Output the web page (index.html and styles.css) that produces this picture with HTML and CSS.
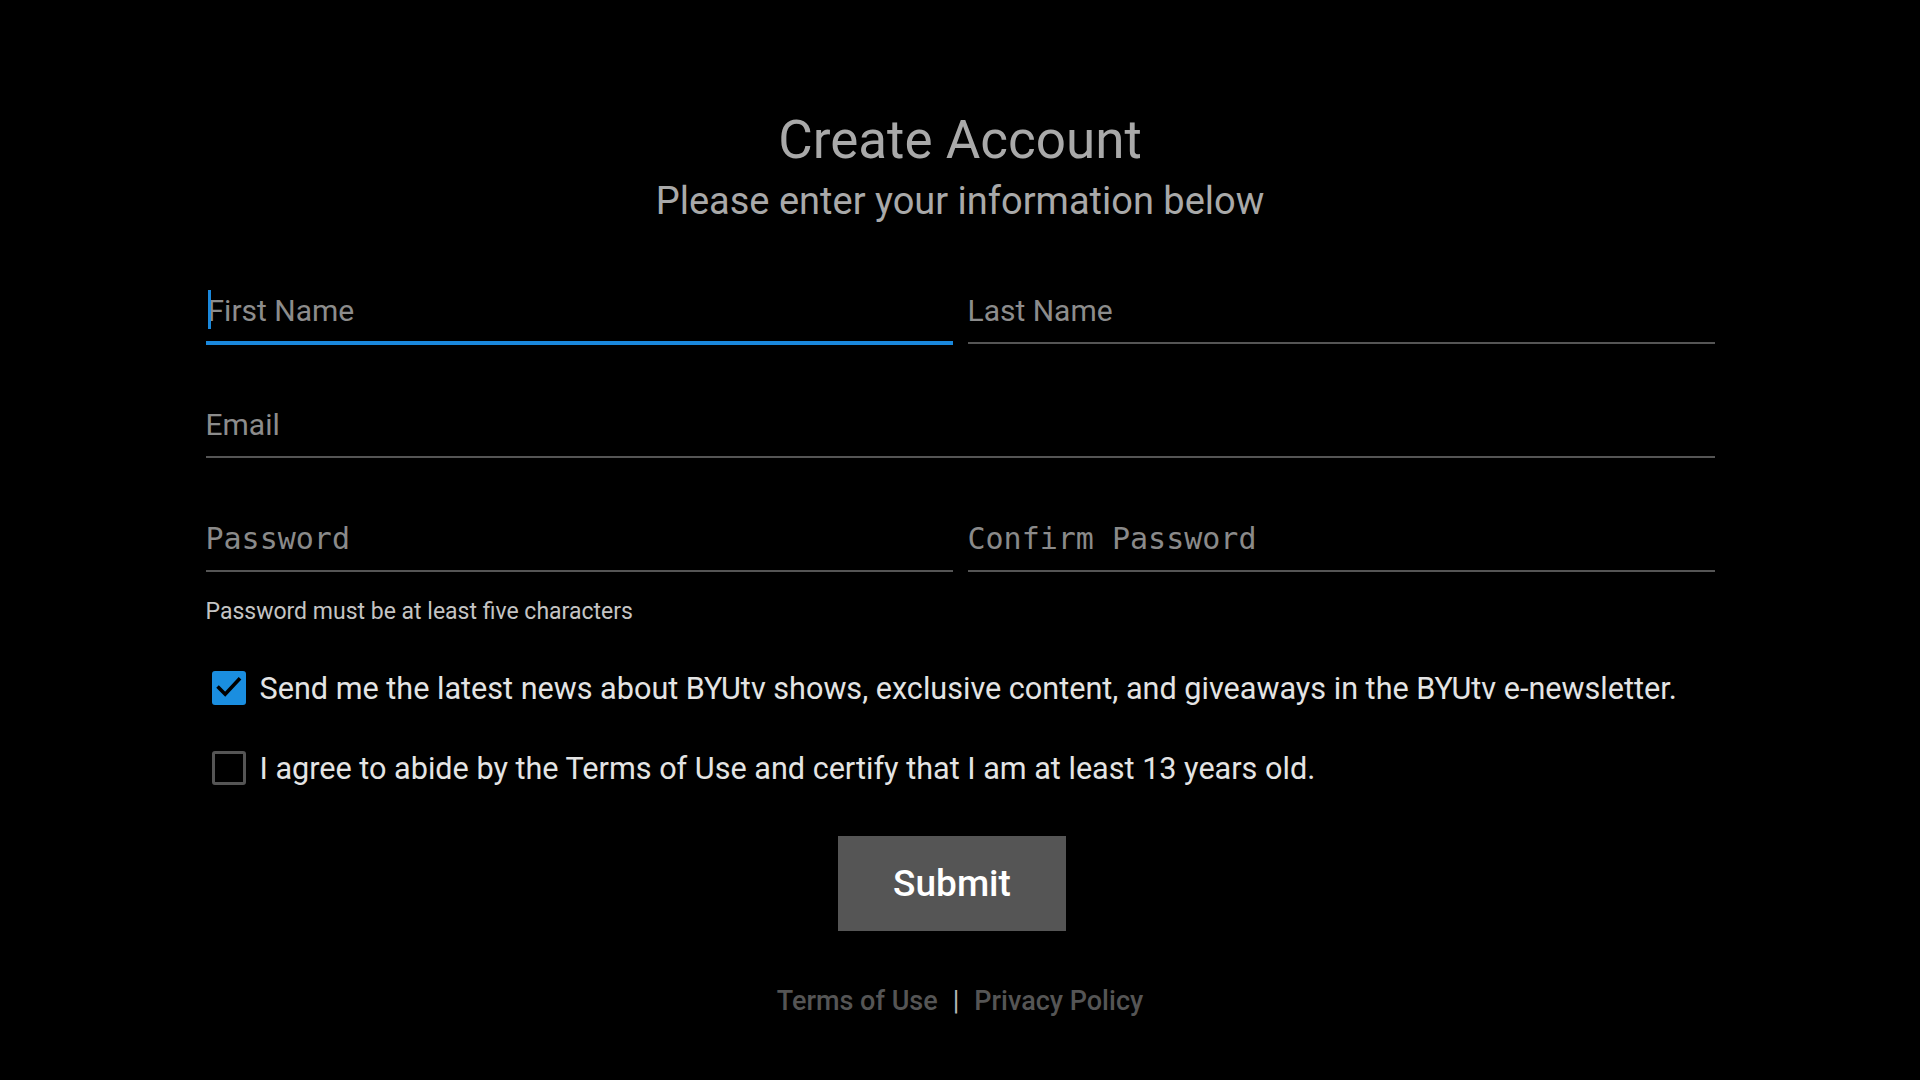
FILE: index.html
```html
<!DOCTYPE html>
<html lang="en">
<head>
<meta charset="utf-8">
<title>Create Account</title>
<link rel="stylesheet" href="styles.css">
</head>
<body>
<main class="page">
  <header class="heading">
    <h1 class="title">Create Account</h1>
    <p class="subtitle">Please enter your information below</p>
  </header>

  <form class="form">
    <div class="fields">
      <div class="field field--focused">
        <span class="cursor"></span>
        <span class="placeholder placeholder--indent">First Name</span>
      </div>
      <div class="field">
        <span class="placeholder">Last Name</span>
      </div>
      <div class="field field--wide">
        <span class="placeholder">Email</span>
      </div>
      <div class="field">
        <span class="placeholder placeholder--mono">Password</span>
      </div>
      <div class="field">
        <span class="placeholder placeholder--mono">Confirm Password</span>
      </div>
    </div>

    <p class="helper">Password must be at least five characters</p>

    <div class="checks">
      <label class="check">
        <span class="box box--checked">
          <svg viewBox="0 0 34 34" width="34" height="34" aria-hidden="true">
            <path d="M6.8 16.8 L13.2 23.2 L26.8 8.6" fill="none" stroke="#000" stroke-width="3.6" stroke-linecap="square" stroke-linejoin="miter"/>
          </svg>
        </span>
        <span class="check-text">Send me the latest news about BYUtv shows, exclusive content, and giveaways in the BYUtv e-newsletter.</span>
      </label>
      <label class="check">
        <span class="box"></span>
        <span class="check-text">I agree to abide by the Terms of Use and certify that I am at least 13 years old.</span>
      </label>
    </div>

    <div class="actions">
      <button type="button" class="submit">Submit</button>
    </div>
  </form>

  <footer class="links">
    <a class="link">Terms of Use</a>
    <span class="sep">|</span>
    <a class="link">Privacy Policy</a>
  </footer>
</main>
</body>
</html>
```

FILE: styles.css
```css
html, body {
  margin: 0;
  padding: 0;
  background: #000;
}

body {
  font-family: Roboto, "Liberation Sans", Arial, sans-serif;
  color: #a8a8a8;
  width: 1920px;
  height: 1080px;
  overflow: hidden;
}

.page {
  width: 1509px;
  margin: 0 auto;
  padding-top: 110px;
}

.heading {
  text-align: center;
}

.title {
  margin: 0;
  font-size: 53px;
  line-height: 60px;
  font-weight: 400;
  color: #a9a9a9;
}

.subtitle {
  margin: 9px 0 0;
  font-size: 38px;
  line-height: 44px;
  color: #a9a9a9;
}

.form {
  margin: 68px 0 0;
}

.fields {
  display: grid;
  grid-template-columns: 1fr 1fr;
  column-gap: 15px;
  row-gap: 61px;
}

.field {
  position: relative;
  height: 40px;
  padding-bottom: 11px;
  border-bottom: 2px solid #555;
  display: flex;
  align-items: center;
}

.field--wide {
  grid-column: 1 / span 2;
}

.field--focused {
  border-bottom: 4px solid #1a88dc;
  padding-bottom: 10px;
  margin-bottom: -1px;
}

.cursor {
  position: absolute;
  left: 2px;
  top: -1px;
  width: 3px;
  height: 39px;
  background: #1a88dc;
}

.placeholder {
  font-size: 30px;
  line-height: 40px;
  color: #8c8c8c;
  white-space: nowrap;
}

.placeholder--indent {
  padding-left: 2px;
}

.placeholder--mono {
  font-family: "DejaVu Sans Mono", "Liberation Mono", monospace;
  font-size: 30px;
  color: #8a8a8a;
}

.helper {
  margin: 26px 0 0;
  font-size: 23px;
  line-height: 28px;
  color: #c4c4c4;
}

.checks {
  margin-top: 44px;
  display: flex;
  flex-direction: column;
  gap: 44px;
}

.check {
  display: flex;
  align-items: center;
  gap: 14px;
  padding-left: 6px;
}

.box {
  flex: none;
  box-sizing: border-box;
  width: 34px;
  height: 34px;
  border: 3px solid #555;
  border-radius: 3px;
}

.box--checked {
  border: none;
  background: #1a8ee0;
  display: flex;
}

.check-text {
  font-size: 30.6px;
  line-height: 36px;
  color: #e4e4e4;
  white-space: nowrap;
  position: relative;
  top: 1px;
}

.actions {
  margin-top: 50px;
  display: flex;
  justify-content: center;
  padding-right: 16px;
}

.submit {
  width: 228px;
  height: 95px;
  border: none;
  background: #555;
  color: #fff;
  font-family: Roboto, "Liberation Sans", Arial, sans-serif;
  font-size: 37px;
  font-weight: 500;
  padding: 0;
}

.links {
  margin-top: 54px;
  display: flex;
  justify-content: center;
  align-items: center;
  font-size: 27px;
  line-height: 32px;
}

.link {
  color: #555;
  font-weight: 500;
}

.sep {
  color: #b8b8b8;
  margin: 0 15px;
}
```
